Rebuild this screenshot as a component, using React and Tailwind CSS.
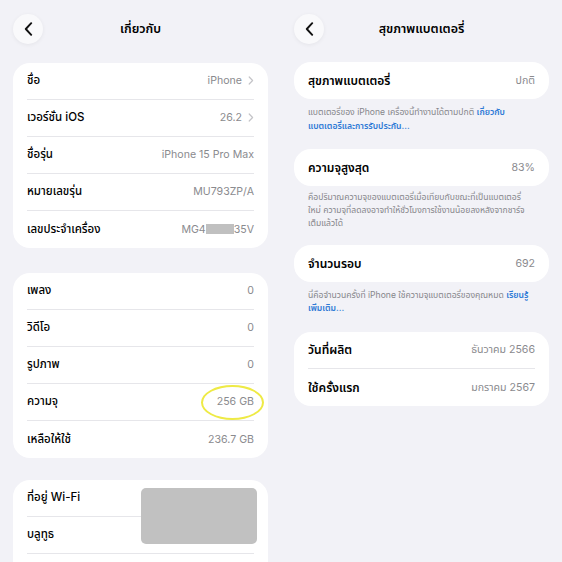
import React from 'react'

const font = { fontFamily: 'Inter, "Noto Sans Thai", "Noto Sans", "DejaVu Sans", sans-serif' }

function BackButton() {
  return (
    <div className="w-[30px] h-[30px] rounded-full bg-[#f9f9fb] shadow-[0_1px_4px_rgba(0,0,0,0.06)] flex items-center justify-center">
      <svg width="9" height="14" viewBox="0 0 9 14" fill="none">
        <path d="M7.2 1.2 1.8 7l5.4 5.8" stroke="#111" strokeWidth="1.9" strokeLinecap="round" strokeLinejoin="round" />
      </svg>
    </div>
  )
}

function Header({ title }) {
  return (
    <div className="grid grid-cols-[30px_1fr_30px] items-center pt-[14px]">
      <BackButton />
      <p className="text-center text-[12.5px] font-semibold text-black">{title}</p>
      <div />
    </div>
  )
}

function Chevron() {
  return (
    <svg width="6" height="9" viewBox="0 0 6 9" fill="none" className="ml-[6px]">
      <path d="M1.2 1 4.6 4.5 1.2 8" stroke="#c4c4c8" strokeWidth="1.2" strokeLinecap="round" strokeLinejoin="round" />
    </svg>
  )
}

function Row({ label, value, chevron, bold, children, last }) {
  return (
    <div className={`relative mx-[14px] h-[37px] flex items-center justify-between ${last ? '' : 'border-b border-[#e6e6ea]'}`}>
      <span className={`text-black ${bold ? 'text-[12px] font-semibold' : 'text-[11.5px] font-medium'}`}>{label}</span>
      <span className="flex items-center text-[10.6px] text-[#8a8a8e]">
        {value}
        {chevron && <Chevron />}
      </span>
      {children}
    </div>
  )
}

function Card({ children, className = '' }) {
  return <div className={`relative bg-white rounded-[17px] ${className}`}>{children}</div>
}

function About() {
  return (
    <div className="w-[281px] shrink-0 px-[13px]">
      <Header title="เกี่ยวกับ" />
      <Card className="mt-[19px]">
        <Row label="ชื่อ" value="iPhone" chevron />
        <Row label="เวอร์ชั่น iOS" value="26.2" chevron />
        <Row label="ชื่อรุ่น" value="iPhone 15 Pro Max" />
        <Row label="หมายเลขรุ่น" value="MU793ZP/A" />
        <Row
          label="เลขประจำเครื่อง"
          value={
            <>
              MG4
              <span className="inline-block w-[28px] h-[10px] bg-[#c0c0c0]" />
              35V
            </>
          }
          last
        />
      </Card>

      <Card className="mt-[25px]">
        <Row label="เพลง" value="0" />
        <Row label="วิดีโอ" value="0" />
        <Row label="รูปภาพ" value="0" />
        <Row label="ความจุ" value="256 GB">
          <div className="absolute right-[-10px] top-[1px] w-[63px] h-[35px] rounded-[50%] border-2 border-[#eeea45]" />
        </Row>
        <Row label="เหลือให้ใช้" value="236.7 GB" last />
      </Card>

      <Card className="mt-[22px]">
        <Row label="ที่อยู่ Wi-Fi" value="" />
        <Row label="บลูทูธ" value="" />
        <Row label="" value="" last />
        <div className="absolute left-[128px] top-[8px] w-[116px] h-[56px] rounded-[5px] bg-[#c1c1c1]" />
      </Card>
    </div>
  )
}

function Footer({ children, className = '' }) {
  return <p className={`px-[14px] text-[8.6px] leading-[13.5px] text-[#86868b] ${className}`}>{children}</p>
}

function Link({ children }) {
  return <span className="text-[#2f7ad6] font-semibold">{children}</span>
}

function Battery() {
  return (
    <div className="w-[281px] shrink-0 px-[13px]">
      <Header title="สุขภาพแบตเตอรี่" />
      <Card className="mt-[18px]">
        <Row label="สุขภาพแบตเตอรี่" value="ปกติ" bold last />
      </Card>
      <Footer className="pt-[7px]">
        แบตเตอรี่ของ iPhone เครื่องนี้ทำงานได้ตามปกติ <Link>เกี่ยวกับ<br />แบตเตอรี่และการรับประกัน...</Link>
      </Footer>

      <Card className="mt-[16px]">
        <Row label="ความจุสูงสุด" value="83%" bold last />
      </Card>
      <Footer className="pt-[5px] leading-[13px]">
        คือปริมาณความจุของแบตเตอรี่เมื่อเทียบกับขณะที่เป็นแบตเตอรี่<br />
        ใหม่ ความจุที่ลดลงอาจทำให้ชั่วโมงการใช้งานน้อยลงหลังจากชาร์จ<br />
        เต็มแล้วได้
      </Footer>

      <Card className="mt-[15px]">
        <Row label="จำนวนรอบ" value="692" bold last />
      </Card>
      <Footer className="pt-[7px] leading-[13px]">
        นี่คือจำนวนครั้งที่ iPhone ใช้ความจุแบตเตอรี่ของคุณหมด <Link>เรียนรู้<br />เพิ่มเติม...</Link>
      </Footer>

      <Card className="mt-[17px]">
        <Row label="วันที่ผลิต" value="ธันวาคม 2566" bold />
        <Row label="ใช้ครั้งแรก" value="มกราคม 2567" bold last />
      </Card>
    </div>
  )
}

export default function App() {
  return (
    <div className="w-[562px] h-[562px] overflow-hidden flex bg-[#f2f2f7]" style={font}>
      <About />
      <Battery />
    </div>
  )
}
